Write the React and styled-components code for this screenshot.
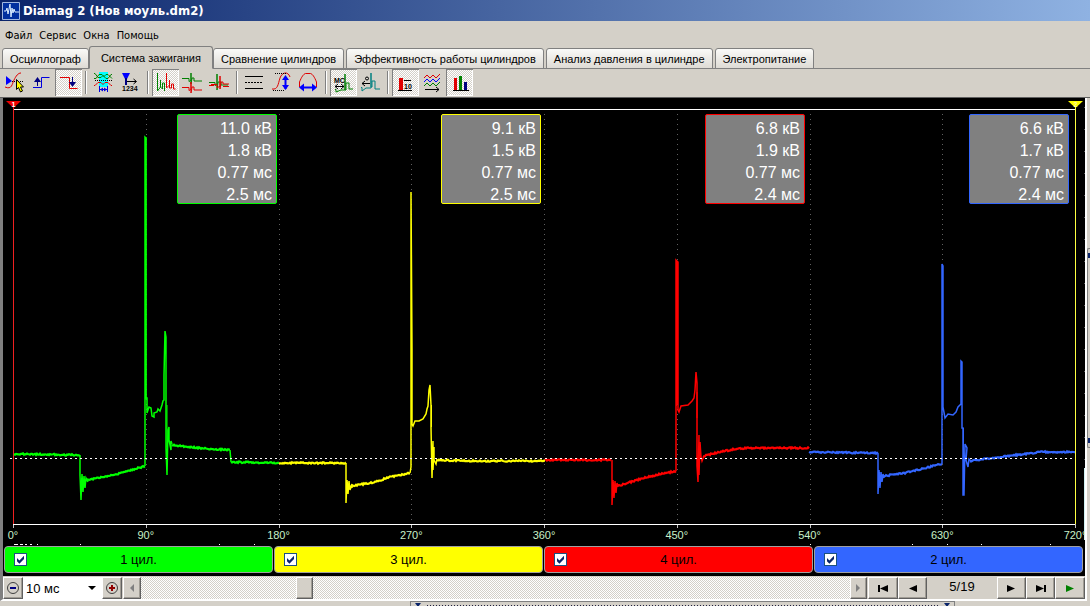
import { useState } from 'react';
import styled, { createGlobalStyle, css } from 'styled-components';

const GlobalStyle = createGlobalStyle`
    * {
        box-sizing: border-box;
    }
    body {
        margin: 0;
        background: #d4d0c8;
        color: #000;
        font-family: "Liberation Sans", Arial, sans-serif;
        font-size: 11px;
    }
    button, select, input {
        font: inherit;
        color: inherit;
        margin: 0;
        padding: 0;
    }
`;

const raised = css`
    background: #d4d0c8;
    border: 1px solid;
    border-color: #fff #606060 #606060 #fff;
    box-shadow: inset -1px -1px 0 #a09c94;
`;
const checker = css`
    background: repeating-conic-gradient(#fff 0 25%, #d4d0c8 0 50%) 0 0 / 2px 2px;
`;

const Window = styled.div`
    display: flex;
    flex-direction: column;
    min-height: 100vh;
    overflow: hidden;
`;
const TitleBar = styled.header`
    display: flex;
    align-items: center;
    gap: 3px;
    height: 21px;
    padding: 0 2px;
    background: linear-gradient(to right, #0a246a, #8fb2e2);
    color: #fff;
`;
const Title = styled.h1`
    margin: 0;
    font: bold 13px "DejaVu Sans Condensed", sans-serif;
    white-space: nowrap;
`;
const Menu = styled.nav`
    display: flex;
    gap: 7px;
    height: 25px;
    padding: 4px 5px 0;
`;
const MenuItem = styled.button`
    border: 0;
    background: none;
    font: 11px "DejaVu Sans Condensed", sans-serif;
`;
const Tabs = styled.div`
    display: flex;
    align-items: flex-end;
    gap: 2px;
    height: 23px;
    padding-left: 2px;
    box-shadow: inset 0 -1px 0 #808080;
`;
const Tab = styled.button`
    height: ${({ $active }) => ($active ? 23 : 21)}px;
    margin: 0 ${({ $active }) => ($active ? -2 : 0)}px;
    padding: 0 ${({ $active }) => ($active ? 11 : 7)}px;
    border: 1px solid #808080;
    border-bottom-color: ${({ $active }) => ($active ? '#d4d0c8' : '#808080')};
    border-radius: 3px 3px 0 0;
    background: ${({ $active }) => ($active ? '#d4d0c8' : 'linear-gradient(#fafaf8, #dedbd5)')};
    white-space: nowrap;
`;
const Toolbar = styled.div`
    display: flex;
    height: 28px;
    padding-left: 1px;
`;
const ToolButton = styled.button`
    width: 27px;
    height: 27px;
    border: 0;
    background: none;
    ${({ $pressed }) => $pressed && css`
        ${checker}
        box-shadow: inset 1px 1px 0 #808080, inset -1px -1px 0 #fff;
    `}
`;
const ToolIcon = styled.svg`
    display: block;
    fill: none;
    text {
        fill: #000;
        font: bold 7px "Liberation Sans", sans-serif;
    }
`;
const Separator = styled.span`
    width: 2px;
    height: 23px;
    margin: 2px 3px;
    border-left: 1px solid #808080;
    border-right: 1px solid #fff;
`;
const Workspace = styled.main`
    display: flex;
    border-top: 1px solid #606060;
`;
const Panel = styled.section`
    flex: 1;
    min-width: 0;
    border: solid;
    border-width: 0 2px 2px 3px;
    border-color: #808080 #fff #fff #808080;
`;
const Plot = styled.div`
    display: grid;
    background: #000;
    overflow: hidden;
    > * {
        grid-area: 1 / 1;
        min-width: 0;
    }
`;
const Scope = styled.svg`
    display: block;
    width: 100%;
    height: 447px;
    font: bold 7px "Liberation Sans", sans-serif;
`;
const Readings = styled.div`
    display: grid;
    grid-template-columns: repeat(4, 1fr);
    justify-items: end;
    align-content: start;
    padding: 16px 16px 0 10px;
`;
const Reading = styled.div`
    width: 100px;
    height: 90px;
    padding: 3px 4px 0;
    border: 1px solid ${({ $color }) => $color};
    border-radius: 2px;
    background: #808080;
    color: #fff;
    font-size: 16px;
    line-height: 22px;
    text-align: right;
`;
const Axis = styled.div`
    display: flex;
    align-self: end;
    justify-content: space-between;
    height: 17px;
    margin: 0 10px;
    color: #c8f0c8;
    line-height: 14px;
`;
const AxisLabel = styled.span`
    display: flex;
    justify-content: center;
    width: 0;
    white-space: nowrap;
`;
const Cylinders = styled.div`
    display: grid;
    grid-template-columns: repeat(4, 1fr);
    gap: 1px;
    padding: 1px 2px 3px 1px;
    background: #000;
`;
const Cylinder = styled.label`
    display: grid;
    grid-template-columns: 1fr auto 1fr;
    align-items: center;
    height: 27px;
    padding: 0 9px;
    border: 1px solid #a0a0a0;
    border-radius: 4px;
    background: ${({ $color }) => $color};
    font-size: 13px;
`;
const Tick = styled.input`
    appearance: none;
    width: 13px;
    height: 13px;
    border: 1px solid #1c5180;
    background: #fff;
    &:checked::before {
        content: "";
        display: block;
        width: 11px;
        height: 11px;
        background: #0a246a;
        clip-path: polygon(18% 36%, 40% 58%, 82% 16%, 82% 46%, 40% 88%, 18% 66%);
    }
`;
const Controls = styled.div`
    display: flex;
    height: 23px;
    padding-top: 1px;
`;
const ControlButton = styled.button`
    ${raised}
    display: flex;
    align-items: center;
    justify-content: center;
    flex: none;
    width: ${({ $width }) => $width}px;
`;
const SelectBox = styled.div`
    display: grid;
    align-items: center;
    width: 79px;
    background: #fff;
    > * {
        grid-area: 1 / 1;
    }
    svg {
        justify-self: end;
        margin-right: 6px;
        pointer-events: none;
    }
`;
const Select = styled.select`
    appearance: none;
    width: 100%;
    height: 20px;
    padding-left: 3px;
    border: 0;
    background: none;
    font-size: 13px;
`;
const ScrollBar = styled.div`
    display: flex;
    flex: 1;
    margin: 0 1px;
`;
const ScrollTrack = styled.div`
    ${checker}
    display: flex;
    flex: 1;
    padding-left: 155px;
`;
const ScrollThumb = styled.div`
    ${raised}
    width: 17px;
`;
const Counter = styled.output`
    flex: none;
    width: 70px;
    font-size: 13px;
    line-height: 20px;
    text-align: center;
`;
const SideSplitter = styled.div`
    display: flex;
    flex-direction: column;
    justify-content: space-between;
    width: 3px;
    height: 200px;
    margin-top: 150px;
    padding: 4px 0;
    border: 1px solid #808080;
    border-right: 0;
    border-radius: 2px 0 0 2px;
    &::before, &::after {
        content: "";
        height: 5px;
        background: #0a246a;
    }
`;
const BottomSplitter = styled.div`
    display: flex;
    align-items: flex-start;
    width: 50%;
    height: 6px;
    margin: 0 135px 0 auto;
    padding: 1px 4px 0;
    border: 1px solid #808080;
    border-bottom: 0;
`;
const Grip = styled.span`
    flex: 1;
    height: 1px;
    margin: 2px 6px;
    background: repeating-linear-gradient(to right, #202040 0 1px, transparent 1px 3px);
`;

const icons = {
  trigger: (
    <>
      <path d="M5 7v9l6-4z" fill="#00f" />
      <path d="M11 12.500h11" stroke="#000" strokeDasharray="1 1" />
      <path d="M4 18c7 3 7-3 9-7s4-7 7-7" stroke="#e00000" />
      <path d="M15.500 10.500v10l2-2 2 4.500 2-1-2-4h3z" fill="#ff0" stroke="#000" />
    </>
  ),
  rise: (
    <>
      <path d="M5 18.500h8.500v-10h8" stroke="#0000e0" />
      <path d="M9.500 17V10" stroke="#000080" />
      <path d="M6 13l3.500-5 3.500 5z" fill="#000080" />
    </>
  ),
  fall: (
    <>
      <path d="M5 8.500h9.500v11h8" stroke="#e00000" />
      <path d="M17.500 8v7" stroke="#000080" />
      <path d="M14 13l3.500 5 3.500-5z" fill="#000080" />
    </>
  ),
  overlay: (
    <>
      <path d="M9 3h9v15H9z" fill="#0ff" />
      <path d="M4 9.500h2l3-4h3l2 2 2-2h2l4 4M4 4.500h1l3 4h3l2-2 3 3h2l3-4h1" stroke="#008000" />
      <path d="M4 16.500h1l3-3h3l2 2 2-2h3l3 3h1" stroke="#e00000" />
      <path d="M5 11.500h17" stroke="#000" strokeDasharray="1 1" />
      <path d="M9.500 17v6M17.500 17v6M10 20.500h8" stroke="#0000e0" />
      <path d="M10 20.500l3-2v4zM17 20.500l-3-2v4z" fill="#0000e0" />
    </>
  ),
  count: (
    <>
      <path d="M5 4h8l-3 6H8z" fill="#00f" />
      <path d="M9 9v7" stroke="#000080" strokeWidth="2" />
      <path d="M10 12.500h9M16.500 10l3 2.500-3 2.500" stroke="#000" />
      <text x="5" y="22">1234</text>
    </>
  ),
  parade: (
    <>
      <path d="M5.500 4v18l3-4V11v7l2 2v-6h2v8" stroke="#008000" />
      <path d="M14.500 4v15l3-3V11v8h2v-4h2v5h2" stroke="#e00000" />
    </>
  ),
  raster: (
    <>
      <path d="M3 9.500h7v3l2-1V4v11l1-6h2v3h8" stroke="#008000" />
      <path d="M3 18.500h7v3l2-1V13v11l1-6h2v3h8" stroke="#e00000" />
    </>
  ),
  superposed: (
    <>
      <path d="M3 13.500h6v3l2-1V5v16l1-8h3v3h7" stroke="#008000" />
      <path d="M5 15.500h6v3l3-1V7v13l1-7h2v2h6M3 16.500h5M17 17.500h6" stroke="#e00000" />
    </>
  ),
  lines: (
    <path d="M4 7.500h18M4 19.500h18M4 13.500h2m1 0h2m1 0h2m1 0h2m1 0h2m1 0h2" stroke="#000" />
  ),
  amplitude: (
    <>
      <path d="M4 20c6 1 6-5 8-11s8-7 10-1" stroke="#e00000" />
      <path d="M7 4.500h11M5 21.500h12" stroke="#000" strokeDasharray="1 1" />
      <path d="M17.500 8v12" stroke="#00f" strokeWidth="2" />
      <path d="M14 11l3.500-5 3.500 5zM14 16l3.500 5 3.500-5z" fill="#00f" />
    </>
  ),
  period: (
    <>
      <path d="M4.500 18v-5c2-5 4-8 6-8.500h5c2 .5 4 3.500 6 8.500v5" stroke="#e00000" />
      <path d="M7 18.500h13" stroke="#00f" strokeWidth="2" />
      <path d="M4 18.500l5-4v8zM22 18.500l-5-4v8z" fill="#00f" />
    </>
  ),
  time: (
    <>
      <path d="M5 20.500h1v2.500l5-2h4V5v16h1v-7h3v6h4" stroke="#008000" />
      <path d="M5 17.500h9M8 15l-3 2.500 3 2.500M11 15l3 2.500-3 2.500" stroke="#000" />
      <text x="4" y="14">МС</text>
    </>
  ),
  degrees: (
    <>
      <path d="M4 18.500h1v3.500l4-3h5V4v14h1v-6h3v8h5" stroke="#008080" />
      <path d="M5 14.500h8M8 12l-3 2.500 3 2.500" stroke="#000" />
      <circle cx="10" cy="9.500" r="1.500" stroke="#000" />
    </>
  ),
  values: (
    <>
      <path d="M7 9h4v12H7z" fill="#e00000" />
      <path d="M6 21.500h14M12 11.500h7" stroke="#000" />
      <text x="12" y="20">10</text>
    </>
  ),
  waves: (
    <>
      <path d="M5 9l3-3 3 3 3-3 3 3 4-4" stroke="#e00000" />
      <path d="M5 13l3-3 3 3 3-3 3 3 4-4" stroke="#00f" />
      <path d="M5 17l3-3 3 3 3-3 3 3 4-4" stroke="#008000" />
      <path d="M6 20.500h14M17 18l3 2.500-3 2.500" stroke="#000" />
    </>
  ),
  bars: (
    <>
      <path d="M8 9h3v12H8z" fill="#e00000" />
      <path d="M13 7h3v14h-3z" fill="#008000" />
      <path d="M18 13h3v8h-3z" fill="#000080" />
      <path d="M7 21.500h16" stroke="#000" />
    </>
  ),
};

const toolGroups = [
  [
    { icon: 'trigger', label: 'Синхронизация' },
    { icon: 'rise', label: 'Фронт' },
    { icon: 'fall', label: 'Спад', pressed: true },
  ],
  [
    { icon: 'overlay', label: 'Наложение' },
    { icon: 'count', label: 'Порядок цилиндров' },
  ],
  [
    { icon: 'parade', label: 'Парад', pressed: true },
    { icon: 'raster', label: 'Растр' },
    { icon: 'superposed', label: 'Совмещение' },
  ],
  [
    { icon: 'lines', label: 'Линии' },
    { icon: 'amplitude', label: 'Амплитуда' },
    { icon: 'period', label: 'Период' },
  ],
  [
    { icon: 'time', label: 'Миллисекунды', pressed: true },
    { icon: 'degrees', label: 'Градусы' },
  ],
  [
    { icon: 'values', label: 'Значения', pressed: true },
    { icon: 'waves', label: 'Осциллограммы' },
    { icon: 'bars', label: 'Диаграмма', pressed: true },
  ],
];

const menu = ['Файл', 'Сервис', 'Окна', 'Помощь'];

const tabs = [
  'Осциллограф',
  'Система зажигания',
  'Сравнение цилиндров',
  'Эффективность работы цилиндров',
  'Анализ давления в цилиндре',
  'Электропитание',
];

// base: slow parts with noise, spikes: fast parts drawn as they are
const cylinders = [
  {
    name: '1 цил.',
    color: '#00ff00',
    values: ['11.0 кВ', '1.8 кВ', '0.77 мс', '2.5 мс'],
    base: [
      [[14, 454], [80, 455]],
      [[83, 481], [88, 480], [118, 474], [145, 466]],
      [[172, 445], [190, 447], [210, 449], [230, 450]],
      [[231, 462], [279, 463]],
    ],
    spikes: '80,455 80,475 81,500 82,474 83,492 84,476 85,488 86,478 88,482 M145,466 145,137 146,138 146,398 147,398 147,413 149,407 151,408 152,416 154,417 154,413 157,412 158,409 160,411 162,405 163,401 164,400 164,375 165,331 166,337 166,448 167,475 168,430 169,427 169,440 171,450 171,441 172,444 M230,450 231,462',
    thick: 'M146,137V400M81.500,478V490M167,405V447',
  },
  {
    name: '3 цил.',
    color: '#ffff00',
    values: ['9.1 кВ', '1.5 кВ', '0.77 мс', '2.5 мс'],
    base: [
      [[279, 463], [346, 463]],
      [[348, 487], [352, 486], [375, 482], [390, 477], [410, 473]],
      [[437, 460], [470, 461], [545, 461]],
    ],
    spikes: '346,463 346,503 347,480 348,494 349,481 350,490 352,484 352,488 M410,473 411,467 411,192 412,350 412,424 413,426 415,421 419,421 423,419 426,414 427,409 428,406 429,390 430,385 431,405 431,427 432,478 433,441 433,470 434,447 434,460 436,464 437,459',
    thick: 'M347.500,482V490M431.500,405V427',
  },
  {
    name: '4 цил.',
    color: '#ff0000',
    values: ['6.8 кВ', '1.9 кВ', '0.77 мс', '2.4 мс'],
    base: [
      [[545, 460], [611, 460]],
      [[614, 487], [618, 486], [640, 479], [660, 474], [676, 471]],
      [[703, 456], [720, 452], [735, 449], [750, 448], [809, 448]],
    ],
    spikes: '612,460 612,505 613,480 614,498 615,481 616,493 617,483 618,487 M676,471 676,260 678,262 678,410 679,412 681,406 688,405 692,401 694,398 695,390 696,372 697,383 697,466 698,482 699,435 699,475 700,442 701,457 702,461 704,456',
    thick: 'M676.500,260V406M677.500,262V404M613.500,482V492M697,392V418',
  },
  {
    name: '2 цил.',
    color: '#3366ff',
    values: ['6.6 кВ', '1.7 кВ', '0.77 мс', '2.4 мс'],
    base: [
      [[809, 452], [878, 453]],
      [[880, 477], [884, 476], [905, 473], [925, 468], [942, 464]],
      [[970, 461], [985, 459], [1000, 457], [1025, 454], [1040, 452], [1075, 452]],
    ],
    spikes: '878,453 878,494 879,470 880,488 881,472 882,482 883,474 884,478 M942,464 942,264 943,266 943,407 945,418 948,414 953,415 956,412 958,407 961,404 961,361 962,362 962,428 963,428 963,495 964,495 965,444 967,448 966,460 968,467 969,459 971,461',
    thick: 'M942.500,264V407M963.500,428V495M879.500,472V482',
  },
];

const ticks = [0, 90, 180, 270, 360, 450, 540, 630, 720];
const tickX = (deg) => Math.round(13 + (deg * 1062) / 720);

const noise = (x) => {
  const n = Math.sin(x * 127.1) * 43758.5;
  return n - Math.floor(n) - 0.5;
};

const noisyPath = (points) => {
  let d = `M${points[0].join(',')}`;
  points.slice(1).forEach(([x2, y2], i) => {
    const [x1, y1] = points[i];
    for (let x = x1 + 1; x <= x2; x += 1) {
      const y = y1 + ((y2 - y1) * (x - x1)) / (x2 - x1);
      d += `L${x},${(y + noise(x) * 1.5).toFixed(1)}`;
    }
  });
  return d;
};

function Trace({ cylinder }) {
  const {
    color, base, spikes, thick,
  } = cylinder;
  return (
    <g stroke={color} fill="none">
      {base.map((points) => (
        <path key={points[0][0]} d={noisyPath(points)} strokeWidth="2.200" />
      ))}
      <path d={`M${spikes}`} strokeWidth="1.500" />
      <path d={thick} />
    </g>
  );
}

function Oscillogram() {
  return (
    <Scope viewBox="3 98 1082 447" preserveAspectRatio="none" role="img" aria-label="Осциллограмма">
      {ticks.slice(1, -1).map((deg) => (
        <g key={deg}>
          <path d={`M${tickX(deg) + 0.5} 114V524`} stroke="#606060" strokeDasharray="1 4" />
          <path d={`M${tickX(deg) + 0.5} 524v4`} stroke="#c0c0c0" />
        </g>
      ))}
      <path d="M13 109.500H1075M13 524.500H1075" stroke="#fff" />
      <path d="M13.500 107V524" stroke="#f02020" />
      <path d="M13.500 525v3" stroke="#c0c0c0" />
      {cylinders.map((cylinder) => <Trace key={cylinder.name} cylinder={cylinder} />)}
      <path d="M10 458.500H1075" stroke="#fff" strokeDasharray="2 3" />
      <path d="M1075.500 105V524" stroke="#ffff40" />
      <path d="M1075.500 524v4" stroke="#c0c0c0" />
      <path d="M6 101h15l-7.500 7z" fill="#f00000" />
      <path d="M1068 101h15l-7.500 7z" fill="#ffff00" />
      <text x="11.500" y="107" fill="#fff">1</text>
      <text x="1073.500" y="107" fill="#ffffa0">2</text>
      <path d="M14 544.500h4m2 0h3m2 0h2m3 0h2m5 0h1m42 0h1m138 0h1m34 0h1M810 544.500h1m101 0h1m34 0h1m33 0h1m68 0h1" stroke="#fff" />
      <path d="M1084.500 107v438" stroke="#606060" strokeDasharray="1 21" />
      <path d="M1084.500 468v72" stroke="#d0f0f0" />
    </Scope>
  );
}

function Arrow({ left = false, bar = false, color = '#000' }) {
  return (
    <svg width="11" height="7" aria-hidden="true">
      <path d={left ? 'M10 0v7L2 3.500z' : 'M1 0v7l8-3.500z'} fill={color} />
      {bar && <path d={left ? 'M0 0h2v7H0z' : 'M9 0h2v7H9z'} fill={color} />}
    </svg>
  );
}

function ScrollArrow({ left = false }) {
  return (
    <svg width="5" height="8" aria-hidden="true">
      <path d={left ? 'M4 0v8L0 4z' : 'M0 0v8l4-4z'} fill="#808080" />
    </svg>
  );
}

function ZoomSign({ plus = false }) {
  return (
    <svg width="14" height="14" aria-hidden="true">
      <circle cx="7" cy="7" r="5.500" fill="none" stroke="#404040" />
      <path d="M4 6h6v2H4z" fill={plus ? '#900000' : '#000080'} />
      {plus && <path d="M6 4h2v6H6z" fill="#900000" />}
    </svg>
  );
}

function Down({ color = '#000', size = 8 }) {
  return (
    <svg width={size} height="4" aria-hidden="true">
      <path d={`M0 0h${size}L${size / 2} 4z`} fill={color} />
    </svg>
  );
}

function App() {
  const [activeTab, setActiveTab] = useState(tabs[1]);

  return (
    <Window>
      <GlobalStyle />
      <TitleBar>
        <svg width="18" height="19" aria-hidden="true">
          <path d="M.5 1.500h17v17H.5z" fill="#0030a0" stroke="#a0b8e0" />
          <path d="M2 10h2l1-3 1 6 2-10 1 13 1-9 1 5 1-4 1 3h4" fill="none" stroke="#d8ecff" />
        </svg>
        <Title>Diamag 2 (Нов моуль.dm2)</Title>
      </TitleBar>
      <Menu>
        {menu.map((item) => <MenuItem key={item}>{item}</MenuItem>)}
      </Menu>
      <Tabs role="tablist">
        {tabs.map((tab) => (
          <Tab
            key={tab}
            role="tab"
            aria-selected={tab === activeTab}
            $active={tab === activeTab}
            onClick={() => setActiveTab(tab)}
          >
            {tab}
          </Tab>
        ))}
      </Tabs>
      <Toolbar>
        {toolGroups.map((group, i) => [
          i > 0 && <Separator key={`sep-${group[0].icon}`} />,
          ...group.map(({ icon, label, pressed }) => (
            <ToolButton key={icon} aria-label={label} aria-pressed={!!pressed} $pressed={pressed}>
              <ToolIcon width="27" height="27">{icons[icon]}</ToolIcon>
            </ToolButton>
          )),
        ])}
      </Toolbar>
      <Workspace>
        <Panel>
          <Plot>
            <Oscillogram />
            <Readings>
              {cylinders.map(({ name, color, values }) => (
                <Reading key={name} $color={color}>
                  {values.map((value) => <div key={value}>{value}</div>)}
                </Reading>
              ))}
            </Readings>
            <Axis>
              {ticks.map((deg) => (
                <AxisLabel key={deg}>
                  {`${deg}°`}
                </AxisLabel>
              ))}
            </Axis>
          </Plot>
          <Cylinders>
            {cylinders.map(({ name, color }) => (
              <Cylinder key={name} $color={color}>
                <Tick type="checkbox" defaultChecked />
                <span>{name}</span>
              </Cylinder>
            ))}
          </Cylinders>
          <Controls>
            <ControlButton $width={20} aria-label="Уменьшить"><ZoomSign /></ControlButton>
            <SelectBox>
              <Select aria-label="Развёртка" defaultValue="10">
                <option value="10">10 мс</option>
                <option value="20">20 мс</option>
              </Select>
              <Down />
            </SelectBox>
            <ControlButton $width={20} aria-label="Увеличить"><ZoomSign plus /></ControlButton>
            <ScrollBar>
              <ControlButton $width={18} aria-label="Влево"><ScrollArrow left /></ControlButton>
              <ScrollTrack>
                <ScrollThumb />
              </ScrollTrack>
              <ControlButton $width={17} aria-label="Вправо"><ScrollArrow /></ControlButton>
            </ScrollBar>
            <ControlButton $width={30} aria-label="Первый кадр"><Arrow left bar /></ControlButton>
            <ControlButton $width={29} aria-label="Предыдущий кадр"><Arrow left /></ControlButton>
            <Counter>5/19</Counter>
            <ControlButton $width={29} aria-label="Следующий кадр"><Arrow /></ControlButton>
            <ControlButton $width={29} aria-label="Последний кадр"><Arrow bar /></ControlButton>
            <ControlButton $width={30} aria-label="Пуск"><Arrow color="#008000" /></ControlButton>
          </Controls>
        </Panel>
        <SideSplitter />
      </Workspace>
      <BottomSplitter>
        <Down size={6} color="#0a246a" />
        <Grip />
        <Down size={6} color="#0a246a" />
      </BottomSplitter>
    </Window>
  );
}

export default App;
